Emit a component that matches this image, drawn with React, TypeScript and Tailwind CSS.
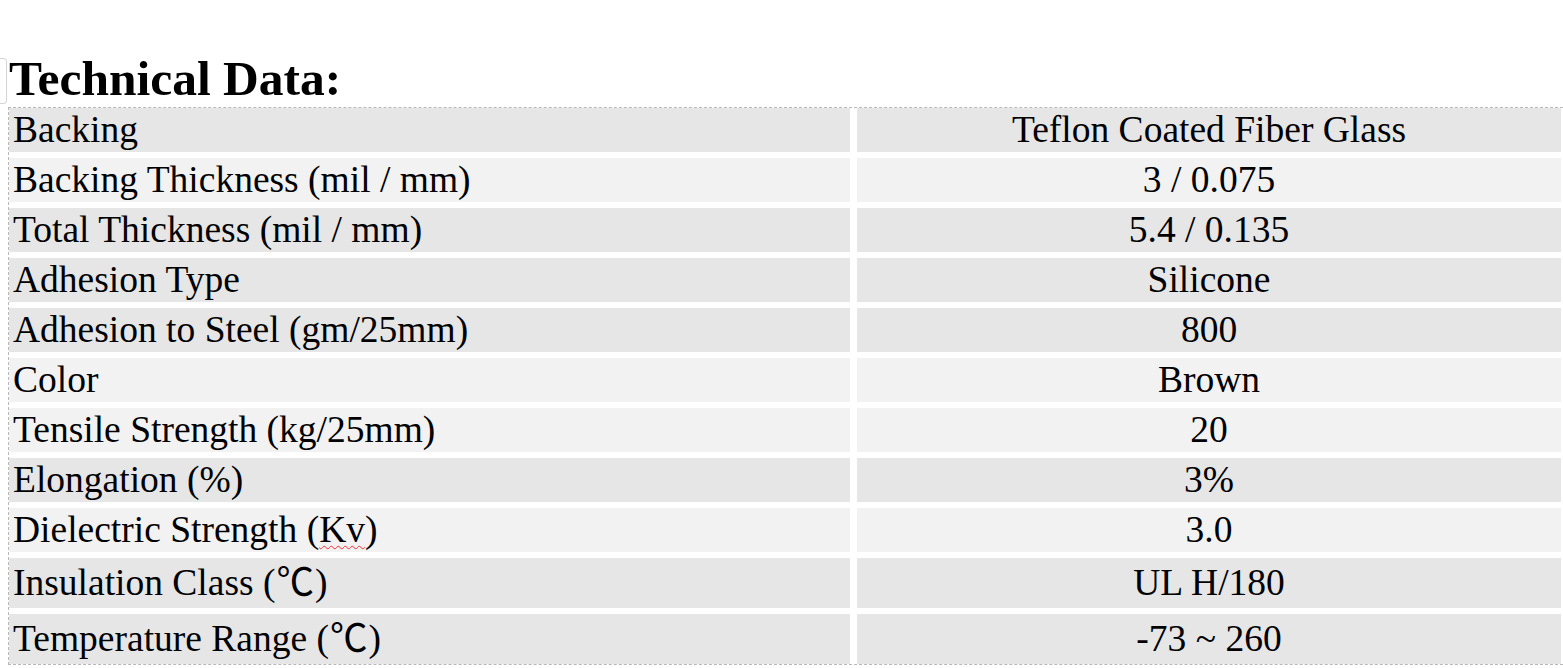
const rows: { label: string; value: string; shade: "dark" | "light"; tall?: boolean }[] = [
  { label: "Backing", value: "Teflon Coated Fiber Glass", shade: "dark" },
  { label: "Backing Thickness (mil / mm)", value: "3 / 0.075", shade: "light" },
  { label: "Total Thickness (mil / mm)", value: "5.4 / 0.135", shade: "dark" },
  { label: "Adhesion Type", value: "Silicone", shade: "dark" },
  { label: "Adhesion to Steel (gm/25mm)", value: "800", shade: "dark" },
  { label: "Color", value: "Brown", shade: "light" },
  { label: "Tensile Strength (kg/25mm)", value: "20", shade: "light" },
  { label: "Elongation (%)", value: "3%", shade: "dark" },
  { label: "Dielectric Strength (Kv)", value: "3.0", shade: "light" },
  { label: "Insulation Class (℃)", value: "UL H/180", shade: "dark", tall: true },
  { label: "Temperature Range (℃)", value: "-73 ~ 260", shade: "dark", tall: true },
];

function Label({ text }: { text: string }) {
  // spell-check squiggle under "Kv", like the original document
  if (text.includes("(Kv)")) {
    return (
      <>
        Dielectric Strength (
        <span className="underline decoration-wavy decoration-red-500 decoration-1 underline-offset-[3px]">Kv</span>)
      </>
    );
  }
  if (text.includes("℃")) {
    const [head] = text.split("(℃)");
    return (
      <>
        {head}(<span className="px-px">℃</span>)
      </>
    );
  }
  return <>{text}</>;
}

export default function App() {
  return (
    <div
      className="relative w-[1563px] h-[668px] overflow-hidden bg-white text-black"
      style={{ fontFamily: '"Liberation Serif", "Noto Sans CJK SC", serif' }}
    >
      {/* cursor bracket artifact */}
      <div className="absolute left-0 top-[58px] w-[7px] h-[46px] border-r border-t border-b border-gray-300 rounded-r-[4px]" />

      <h1 className="pt-[55px] pl-[9px] text-[49.5px] leading-[48px] font-bold">Technical Data:</h1>

      <div className="mt-[4px] ml-[8px] w-[1560px] border border-dashed border-[#b8b8b8]">
        <div className="flex flex-col gap-[6px]">
          {rows.map((r) => {
            const bg = r.shade === "dark" ? "bg-[#e6e6e6]" : "bg-[#f2f2f2]";
            const h = r.tall ? "h-[50px] leading-[50px]" : "h-[44px] leading-[44px]";
            return (
              <div key={r.label} className="flex gap-[7px] text-[37.5px]">
                <div className={`w-[841px] pl-[4px] whitespace-nowrap ${bg} ${h}`}>
                  <Label text={r.label} />
                </div>
                <div className={`w-[704px] text-center whitespace-nowrap ${bg} ${h}`}>{r.value}</div>
              </div>
            );
          })}
        </div>
      </div>
    </div>
  );
}
